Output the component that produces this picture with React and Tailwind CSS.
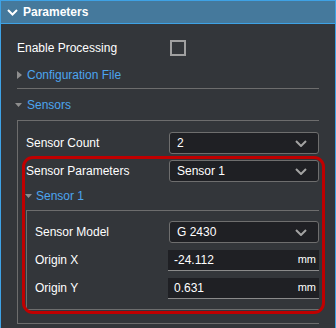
import React from "react";

const SelChevron = () => (
  <svg width="12" height="7" viewBox="0 0 12 7" className="shrink-0">
    <polyline points="1,1 6,6 11,1" fill="none" stroke="#a3a3a3" strokeWidth="2" />
  </svg>
);

const TriRight = () => (
  <svg width="5" height="8" viewBox="0 0 5 8" className="shrink-0">
    <polygon points="0,0 5,4 0,8" fill="#8e8e8e" />
  </svg>
);

const TriDown = () => (
  <svg width="7" height="4" viewBox="0 0 7 4" className="shrink-0">
    <polygon points="0,0 7,0 3.5,4" fill="#8e8e8e" />
  </svg>
);

function Select({ value }) {
  return (
    <div className="ml-auto w-[150px] h-[22px] flex items-center justify-between pl-[7px] pr-[11px] bg-[#1f2024] border border-[#6e6e6e] rounded-[3px] text-white">
      <span>{value}</span>
      <SelChevron />
    </div>
  );
}

function NumInput({ value }) {
  return (
    <div className="ml-auto w-[151px] h-[21px] flex items-center justify-between pl-[6px] pr-[3px] bg-[#1f2024] border-b border-[#8a8a8a] text-white">
      <span>{value}</span>
      <span className="text-[11px]">mm</span>
    </div>
  );
}

function Row({ label, children }) {
  return (
    <div className="h-[28px] flex items-center">
      <span className="text-white">{label}</span>
      {children}
    </div>
  );
}

export default function App() {
  return (
    <div className="relative w-[336px] font-['Liberation_Sans',Arial,sans-serif] text-[12px] leading-normal">
      <div className="h-[24px] border border-[#3ea2e5] bg-[#45799c] flex items-center pl-[6px] gap-[5px]">
        <svg width="11" height="7" viewBox="0 0 11 7" className="shrink-0">
          <polyline points="1,1 5.5,5.5 10,1" fill="none" stroke="#ffffff" strokeWidth="2" />
        </svg>
        <span className="text-white font-bold">Parameters</span>
      </div>
      <div className="border-x border-[#3ea2e5] bg-[#33363a] px-[16px] pt-[10px] pb-[20px]">
        <Row label="Enable Processing">
          <div className="ml-auto w-[150px] flex items-center">
            <div className="ml-[1px] w-[16px] h-[16px] border-2 border-[#a0a0a0]" />
          </div>
        </Row>
        <div className="h-[26px] flex items-center gap-[5px]">
          <TriRight />
          <span className="text-[#4ca5ef]">Configuration File</span>
        </div>
        <div className="h-px bg-[#6d6d6d]" />
        <div className="h-[31px] flex items-center gap-[5px] -ml-[2px]">
          <TriDown />
          <span className="text-[#4ca5ef]">Sensors</span>
        </div>
        <div className="border-l border-t border-b border-[#6d6d6d] pl-[8px] pt-[8px] pb-[13px]">
          <Row label="Sensor Count">
            <Select value="2" />
          </Row>
          <Row label="Sensor Parameters">
            <Select value="Sensor 1" />
          </Row>
          <div className="h-[22px] mb-[3px] flex items-center gap-[4px] -ml-[1px]">
            <TriDown />
            <span className="text-[#4ca5ef]">Sensor 1</span>
          </div>
          <div className="border-l border-t border-b border-[#6d6d6d] pl-[8px] pt-[7px] pb-[7px]">
            <Row label="Sensor Model">
              <Select value="G 2430" />
            </Row>
            <Row label="Origin X">
              <NumInput value="-24.112" />
            </Row>
            <Row label="Origin Y">
              <NumInput value="0.631" />
            </Row>
          </div>
        </div>
      </div>
      <div className="absolute left-[22px] top-[156px] w-[303px] h-[158px] border-[3px] border-[#c00000] rounded-[11px] pointer-events-none" />
    </div>
  );
}
